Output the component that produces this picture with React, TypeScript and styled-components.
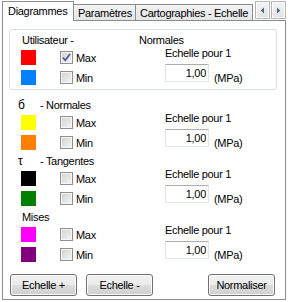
import React from "react";
import styled, { createGlobalStyle } from "styled-components";

const GlobalStyle = createGlobalStyle`
  html, body {
    margin: 0;
    padding: 0;
    background: #fff;
  }
  body {
    font-family: "Liberation Sans", Arial, sans-serif;
    font-size: 11px;
    line-height: 14px;
    letter-spacing: -0.3px;
    color: #000;
  }
`;

const Frame = styled.div`
  width: 288px;
  height: 302px;
  box-sizing: border-box;
  padding: 0 2px 2px 2px;
  display: flex;
  flex-direction: column;
  background: #fff;
`;

const TabStrip = styled.div`
  display: flex;
  height: 21px;
  flex-shrink: 0;
`;

const Tabs = styled.div`
  flex: 1;
  min-width: 0;
  display: flex;
  align-items: flex-end;
  overflow: hidden;
`;

const Tab = styled.div<{ $active?: boolean; $width?: number }>`
  flex-shrink: 0;
  box-sizing: border-box;
  white-space: nowrap;
  border: 1px solid #898c95;
  border-bottom: none;
  ${(p) =>
    p.$active
      ? `
    position: relative;
    z-index: 1;
    height: 20px;
    padding: 2px 0 0 5px;
    background: #fff;
  `
      : `
    height: 17px;
    padding: 1px 4px 0 4px;
    border-left: none;
    background: linear-gradient(#f3f3f3, #e4e4e4);
  `}
  width: ${(p) => (p.$width ? `${p.$width}px` : "auto")};
`;

const Arrows = styled.div`
  display: flex;
  gap: 1px;
  padding-top: 1px;
  align-items: flex-start;
`;

const ArrowButton = styled.div`
  width: 15px;
  height: 18px;
  box-sizing: border-box;
  border: 1px solid #b5b5b5;
  background: linear-gradient(#f4f4f4, #e2e2e2);
  box-shadow: inset 0 0 0 1px #fbfbfb;
  display: flex;
  align-items: center;
  justify-content: center;
`;

const Page = styled.div`
  flex: 1;
  margin-top: -1px;
  border: 1px solid #898c95;
  background: #fff;
  display: flex;
  flex-direction: column;
`;

const GroupBox = styled.div`
  margin: 8px 8px 0 6px;
  border: 1px solid #d5dfe5;
  border-radius: 3px;
  padding: 3px 0 4px 11px;
`;

const Section = styled.div<{ $top: number }>`
  margin-top: ${(p) => p.$top}px;
  padding-left: 18px;
`;

const Header = styled.div`
  display: flex;
  height: 14px;
  white-space: nowrap;
`;

const HeaderTitle = styled.span<{ $width?: number }>`
  width: ${(p) => (p.$width ? `${p.$width}px` : "auto")};
  padding-left: 1px;
`;

const Symbol = styled.span`
  width: 22px;
  margin-left: -3px;
  font-size: 12px;
`;

const Body = styled.div`
  display: flex;
  margin-top: 3px;
  height: 35px;
`;

const LeftRows = styled.div`
  width: 144px;
  display: flex;
  flex-direction: column;
  gap: 5px;
`;

const Row = styled.div`
  display: flex;
  align-items: center;
  height: 15px;
`;

const Swatch = styled.div<{ $color: string }>`
  width: 15px;
  height: 15px;
  background: ${(p) => p.$color};
`;

const CheckBox = styled.div`
  width: 13px;
  height: 13px;
  box-sizing: border-box;
  margin-left: 24px;
  border: 1px solid #8e8f8f;
  background: linear-gradient(135deg, #cfcfcf, #f7f7f7);
  box-shadow: inset 0 0 0 1px #f4f4f4;
  display: flex;
  align-items: center;
  justify-content: center;
`;

const CheckLabel = styled.span`
  margin-left: 3px;
`;

const RightCol = styled.div`
  display: flex;
  flex-direction: column;
  justify-content: flex-end;
  gap: 4px;
  white-space: nowrap;
`;

const ValueRow = styled.div`
  display: flex;
  align-items: flex-start;
`;

const ValueInput = styled.input`
  width: 44px;
  height: 18px;
  box-sizing: border-box;
  margin: 0;
  border: 1px solid #dfe3ea;
  border-top-color: #abadb3;
  padding: 0 2px;
  text-align: right;
  font: inherit;
  letter-spacing: inherit;
  color: #000;
  background: #fff;
  outline: none;
`;

const Unit = styled.span`
  margin: 7px 0 0 5px;
`;

const ButtonRow = styled.div`
  display: flex;
  gap: 9px;
  margin-top: 12px;
  padding: 0 10px 0 7px;
`;

const PushButton = styled.button<{ $push?: boolean }>`
  width: 67px;
  height: 22px;
  margin: 0;
  margin-left: ${(p) => (p.$push ? "auto" : "0")};
  padding: 0;
  border: 1px solid #707070;
  border-radius: 3px;
  background: linear-gradient(#f2f2f2 0%, #ebebeb 50%, #dddddd 50%, #cfcfcf 100%);
  box-shadow: inset 0 0 0 1px #fcfcfc;
  font: inherit;
  letter-spacing: inherit;
  color: #000;
`;

const Check = ({ checked }: { checked?: boolean }) => (
  <CheckBox>
    {checked && (
      <svg width="11" height="11" viewBox="0 0 11 11">
        <path d="M2 5.5 L4.3 8.3 L9 2" fill="none" stroke="#4a5e93" strokeWidth="1.7" />
      </svg>
    )}
  </CheckBox>
);

const SectionBody = ({ colors, checked }: { colors: [string, string]; checked?: boolean }) => (
  <Body>
    <LeftRows>
      <Row>
        <Swatch $color={colors[0]} />
        <Check checked={checked} />
        <CheckLabel>Max</CheckLabel>
      </Row>
      <Row>
        <Swatch $color={colors[1]} />
        <Check />
        <CheckLabel>Min</CheckLabel>
      </Row>
    </LeftRows>
    <RightCol>
      <span>Echelle pour 1</span>
      <ValueRow>
        <ValueInput readOnly value="1,00" />
        <Unit>(MPa)</Unit>
      </ValueRow>
    </RightCol>
  </Body>
);

const ArrowIcon = ({ left }: { left?: boolean }) => (
  <svg width="5" height="7" viewBox="0 0 5 7">
    <path d={left ? "M4 0.5 L0.8 3.5 L4 6.5 Z" : "M1 0.5 L4.2 3.5 L1 6.5 Z"} fill="#4d6185" />
  </svg>
);

export default function App() {
  return (
    <>
      <GlobalStyle />
      <Frame>
        <TabStrip>
          <Tabs>
            <Tab $active $width={72}>Diagrammes</Tab>
            <Tab $width={62}>Paramètres</Tab>
            <Tab>Cartographies - Echelle</Tab>
          </Tabs>
          <Arrows>
            <ArrowButton>
              <ArrowIcon left />
            </ArrowButton>
            <ArrowButton>
              <ArrowIcon />
            </ArrowButton>
          </Arrows>
        </TabStrip>
        <Page>
          <GroupBox>
            <Header>
              <HeaderTitle $width={117}>Utilisateur -</HeaderTitle>
              <span>Normales</span>
            </Header>
            <SectionBody colors={["#ff0000", "#0080ff"]} checked />
          </GroupBox>
          <Section $top={8}>
            <Header>
              <Symbol>б</Symbol>
              <span>- Normales</span>
            </Header>
            <SectionBody colors={["#ffff00", "#ff8000"]} />
          </Section>
          <Section $top={4}>
            <Header>
              <Symbol>τ</Symbol>
              <span>- Tangentes</span>
            </Header>
            <SectionBody colors={["#000000", "#008000"]} />
          </Section>
          <Section $top={4}>
            <Header>
              <HeaderTitle>Mises</HeaderTitle>
            </Header>
            <SectionBody colors={["#ff00ff", "#800080"]} />
          </Section>
          <ButtonRow>
            <PushButton>Echelle +</PushButton>
            <PushButton>Echelle -</PushButton>
            <PushButton $push>Normaliser</PushButton>
          </ButtonRow>
        </Page>
      </Frame>
    </>
  );
}
